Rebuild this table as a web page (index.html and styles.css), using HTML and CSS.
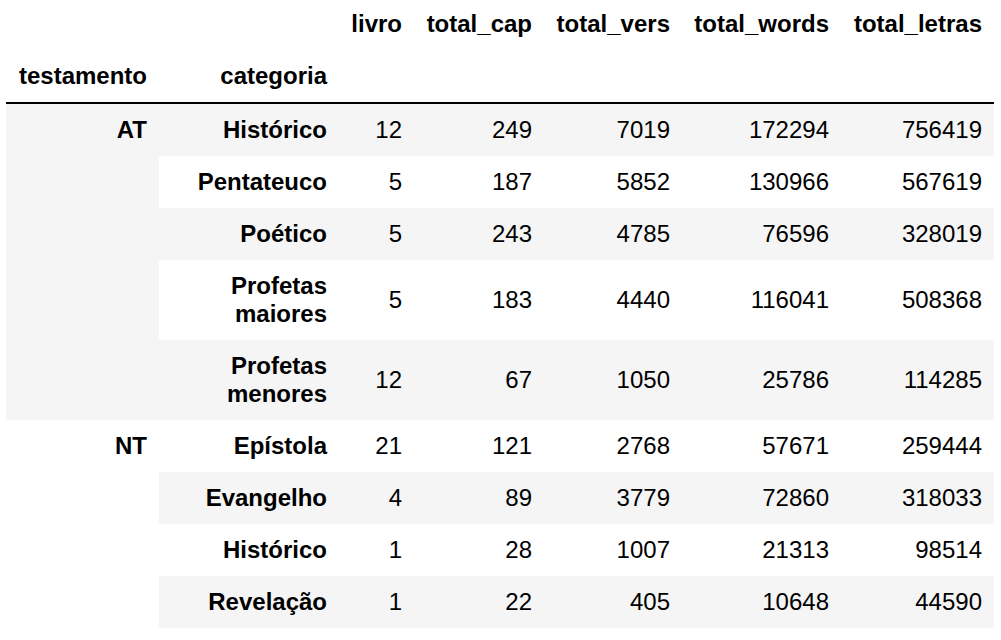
FILE: index.html
```html
<!DOCTYPE html>
<html>
<head>
<meta charset="utf-8">
<link rel="stylesheet" href="styles.css">
</head>
<body>
<table class="dataframe">
  <colgroup>
    <col class="c-test"><col class="c-cat"><col class="c-livro"><col class="c-cap"><col class="c-vers"><col class="c-words"><col class="c-letras">
  </colgroup>
  <thead>
    <tr class="cols">
      <th></th><th></th><th>livro</th><th>total_cap</th><th>total_vers</th><th>total_words</th><th>total_letras</th>
    </tr>
    <tr class="names">
      <th>testamento</th><th>categoria</th><th></th><th></th><th></th><th></th><th></th>
    </tr>
  </thead>
  <tbody>
    <tr><th class="lvl0" rowspan="5">AT</th><th>Histórico</th><td>12</td><td>249</td><td>7019</td><td>172294</td><td>756419</td></tr>
    <tr><th>Pentateuco</th><td>5</td><td>187</td><td>5852</td><td>130966</td><td>567619</td></tr>
    <tr><th>Poético</th><td>5</td><td>243</td><td>4785</td><td>76596</td><td>328019</td></tr>
    <tr><th>Profetas maiores</th><td>5</td><td>183</td><td>4440</td><td>116041</td><td>508368</td></tr>
    <tr><th>Profetas menores</th><td>12</td><td>67</td><td>1050</td><td>25786</td><td>114285</td></tr>
    <tr><th class="lvl0" rowspan="4">NT</th><th>Epístola</th><td>21</td><td>121</td><td>2768</td><td>57671</td><td>259444</td></tr>
    <tr><th>Evangelho</th><td>4</td><td>89</td><td>3779</td><td>72860</td><td>318033</td></tr>
    <tr><th>Histórico</th><td>1</td><td>28</td><td>1007</td><td>21313</td><td>98514</td></tr>
    <tr><th>Revelação</th><td>1</td><td>22</td><td>405</td><td>10648</td><td>44590</td></tr>
  </tbody>
</table>
</body>
</html>
```
FILE: styles.css
```css
html, body {
  margin: 0;
  padding: 0;
  background: #fff;
}
body {
  padding: 0 0 0 6px;
  font-family: "Liberation Sans", Arial, sans-serif;
  font-size: 24px;
  color: #000;
}
.dataframe {
  border-collapse: collapse;
  border-spacing: 0;
  border: none;
  table-layout: fixed;
  width: 988px;
}
.c-test { width: 153px; }
.c-cat { width: 180px; }
.c-livro { width: 75px; }
.c-cap { width: 130px; }
.c-vers { width: 138px; }
.c-words { width: 159px; }
.c-letras { width: 153px; }
.dataframe th,
.dataframe td {
  padding: 12px;
  line-height: 28px;
  text-align: right;
  vertical-align: middle;
  border: none;
  white-space: normal;
}
.dataframe th {
  font-weight: bold;
}
.dataframe td {
  font-weight: normal;
}
.dataframe thead {
  border-bottom: 2px solid #000;
}
.dataframe thead th {
  vertical-align: bottom;
}
.dataframe thead .cols th {
  padding-top: 10px;
}
.dataframe tbody th {
  vertical-align: top;
}
.dataframe tbody tr:nth-child(odd) {
  background: #f5f5f5;
}
```
